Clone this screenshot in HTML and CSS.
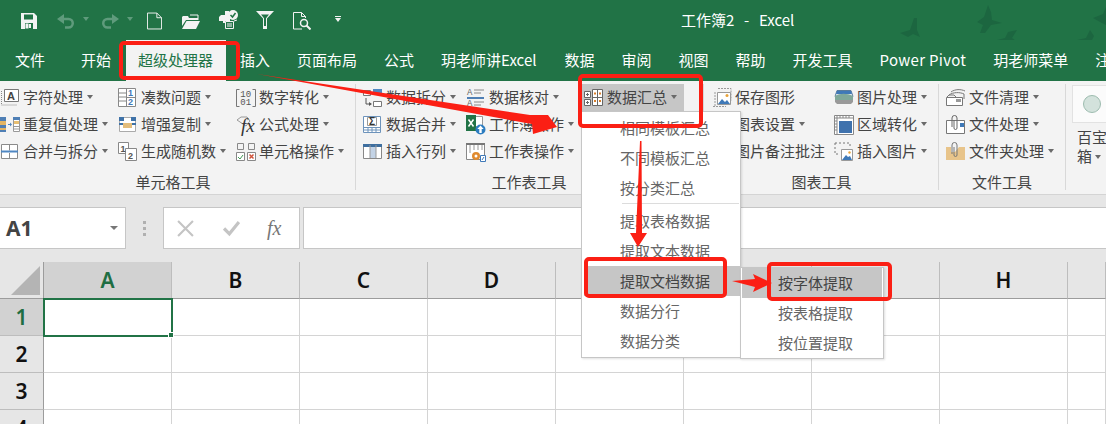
FILE: index.html
```html
<!DOCTYPE html>
<html lang="zh">
<head>
<meta charset="utf-8">
<title>工作簿2 - Excel</title>
<link rel="stylesheet" href="styles.css">
</head>
<body>
<div class="titlebar">
  <svg class="qi q-save" viewBox="0 0 16 16"><path fill="#f3f3f3" d="M0 0h13l3 3v13H0z"/><path fill="#217346" d="M3 1.500h9v5H3zM4 10h8v6H4z"/><path fill="#f3f3f3" d="M8 11h2v4H8zM4.500 10.500h3v5h-3z"/></svg>
  <svg class="qi q-undo" viewBox="0 0 18 15"><path fill="none" stroke="#5f9b7c" stroke-width="2.500" d="M4 5h7.500a4.200 4.200 0 0 1 0 8.500H8"/><path fill="#5f9b7c" d="M7 0v10L0 5z"/></svg>
  <i class="qcaret"></i>
  <svg class="qi q-redo" viewBox="0 0 18 15"><path fill="none" stroke="#5f9b7c" stroke-width="2.500" d="M14 5H6.500a4.200 4.200 0 0 0 0 8.500H10"/><path fill="#5f9b7c" d="M11 0v10l7-5z"/></svg>
  <i class="qcaret"></i>
  <svg class="qi q-new" viewBox="0 0 16 18"><path fill="none" stroke="#f3f3f3" d="M.5.500h10l5 5v12H.500zM10.500.500v5h5"/></svg>
  <svg class="qi q-open" viewBox="0 0 18 15"><path fill="#f3f3f3" d="M0 3l1-1h5l1 2h9v2H4L0 12zM4.500 7H18l-4 8H0z"/><path fill="none" stroke="#f3f3f3" d="M8 1h8v5"/></svg>
  <svg class="qi q-print" viewBox="0 0 20 20"><path fill="#f3f3f3" d="M0 7l2-2h4V1h4v4h1v6h-2v2H4v-2H0z"/><circle cx="14" cy="5" r="5" fill="#f3f3f3"/><path fill="none" stroke="#217346" stroke-width="1.500" d="M11.500 5l2 2 3-4"/><path fill="#217346" d="M6 11h9v8H6z"/><path fill="none" stroke="#f3f3f3" d="M6.500 11.500h8v7h-8zM8 14h5M8 16h5M15 11l3-1"/></svg>
  <svg class="qi q-filter" viewBox="0 0 18 18"><path fill="#f3f3f3" d="M0 0h18l-7 7.500V18H7V7.500z"/><path fill="#217346" d="M5 3.500h8L10 7.200V15H8V7.200z"/></svg>
  <svg class="qi q-find" viewBox="0 0 18 18"><path fill="none" stroke="#f3f3f3" d="M9 17H.500V.500h8l4 4V6M8.500.500v4h4"/><circle cx="11" cy="11" r="3.500" fill="none" stroke="#f3f3f3" stroke-width="1.500"/><path stroke="#f3f3f3" stroke-width="2" d="M13.500 13.500l4 4"/></svg>
  <span class="qcustom"><b></b><i class="qcaret wh"></i></span>
  <span class="booktitle">工作簿2&nbsp; -&nbsp; Excel</span>
  <svg class="birds" viewBox="890 0 216 64"><g fill="#1c6640"><path d="M900 33L910 30 914 18 917 18 917 30 920 37 913 34 908 37z"/><path d="M977 22L984 17 988 5 991 12 992 20 1002 23 991 25 985 33 980 33 983 25z"/><path d="M997 40L1005 38 1008 32 1017 30 1012 38 1020 44 1010 43 1008 50 1004 43z"/><path d="M1077 40L1086 38 1090 30 1094 36 1092 40 1100 44 1093 45 1092 55 1088 45z"/><path d="M1093 18L1103 14 1106 7V25L1100 22z"/></g></svg>
</div>
<nav class="tabs">
  <span class="tab first">文件</span><span class="tab">开始</span><span class="tab active">超级处理器</span><span class="tab">插入</span><span class="tab">页面布局</span><span class="tab">公式</span><span class="tab t-excel">玥老师讲Excel</span><span class="tab">数据</span><span class="tab">审阅</span><span class="tab">视图</span><span class="tab">帮助</span><span class="tab">开发工具</span><span class="tab t-pp">Power Pivot</span><span class="tab">玥老师菜单</span><span class="tab">注</span>
</nav>
<section class="ribbon">
  <div class="group g1">
    <div class="cols">
      <div class="col c118">
        <div class="item"><svg class="ic" viewBox="0 0 20 20"><path fill="none" stroke="#888" stroke-dasharray="1 1" d="M1.500 3v14h16"/><path fill="#fff" stroke="#777" d="M4.500 1.500h14v12h-14z"/><text x="7" y="11.500" class="svgt" fill="#444">A</text></svg><span>字符处理</span><i class="caret"></i></div>
        <div class="item"><svg class="ic" viewBox="0 0 20 20"><path fill="#4f7fb5" d="M0 2h6v4H0zM0 10h6v3H0zM0 15h6v2H0z"/><path fill="#e3b565" d="M0 6h6v4H0zM0 13h6v2H0z"/><path fill="#fff" stroke="#999" d="M13.500 2.500h6v14h-6z"/><path fill="#4f7fb5" d="M13 2h7v3h-7z"/><path fill="#e8bf72" d="M14 6h5v3h-5z"/><path stroke="#999" d="M14 11.500h5M14 14h5"/><path stroke="#4f87c2" d="M8 9.500h3"/><path fill="#4f87c2" d="M10 7.500l2 2-2 2z"/></svg><span>重复值处理</span><i class="caret"></i></div>
        <div class="item"><svg class="ic" viewBox="0 0 20 20"><path fill="#fff" stroke="#8a8a8a" d="M1.500 2.500h16v14h-16zM9.500 2.500v6M9.500 11v5.500"/><path stroke="#4f87c2" stroke-width="2" d="M1 9.500h17"/></svg><span>合并与拆分</span><i class="caret"></i></div>
      </div>
      <div class="col c118">
        <div class="item"><svg class="ic" viewBox="0 0 20 20"><path fill="#fff" stroke="#888" d="M.500.500h17v18H.500zM8.500.500v18M1 5h7M1 9h7M1 13h7M9 9.500h8"/><text x="10" y="8" class="svgn" fill="#3f79b8">1</text><text x="10" y="17" class="svgn" fill="#3f79b8">2</text></svg><span>凑数问题</span><i class="caret"></i></div>
        <div class="item"><svg class="ic" viewBox="0 0 20 20"><path fill="#fff" stroke="#aaa" d="M1.500 2.500h16v14h-16z"/><path fill="#3f72a8" d="M1 2h5v4H1zM13 2h5v4h-5z"/><path fill="#e3bd7c" d="M5 8h9v5H5z"/><path fill="#3f72a8" d="M1 8h4v2H1zM14 8h4v2h-4z"/></svg><span>增强复制</span><i class="caret"></i></div>
        <div class="item"><svg class="ic" viewBox="0 0 20 20"><path fill="#fff" stroke="#888" d="M.500.500h10v11H.500z"/><path fill="#fff" stroke="#888" d="M7.500 6.500h11v12h-11z"/><text x="2.500" y="9.500" class="svgn" fill="#555">1</text><text x="10" y="17" class="svgn" fill="#555">2</text></svg><span>生成随机数</span><i class="caret"></i></div>
      </div>
      <div class="col">
        <div class="item"><svg class="ic" viewBox="0 0 20 20"><path fill="none" stroke="#777" d="M3.500 1.500H.500v17h3M16.500 1.500h3v17h-3"/><text x="4.300" y="9" class="svgm" fill="#555">10</text><text x="4.300" y="17" class="svgm" fill="#555">01</text></svg><span>数字转化</span><i class="caret"></i></div>
        <div class="item"><svg class="ic" viewBox="0 0 20 20"><path fill="none" stroke="#999" d="M1 5l4-3h6l3 4-4 5z"/><text x="5" y="17" class="svgf" fill="#333">fx</text></svg><span>公式处理</span><i class="caret"></i></div>
        <div class="item"><svg class="ic" viewBox="0 0 20 20"><path fill="none" stroke="#888" d="M1.500 1.500h6v6h-6zM12.500 1.500h6v6h-6z"/><path fill="#fff" stroke="#888" d="M.500 10.500h8v8h-8zM11.500 10.500h8v8h-8z"/><path fill="none" stroke="#3f9a55" d="M2 15l2 2 3-4"/><path fill="none" stroke="#d0533a" stroke-width="1.500" d="M13.500 12.500l4 4M17.500 12.500l-4 4"/></svg><span>单元格操作</span><i class="caret"></i></div>
      </div>
    </div>
    <div class="glabel lb1">单元格工具</div>
  </div>
  <div class="group g2">
    <div class="cols">
      <div class="col c103">
        <div class="item"><svg class="ic" viewBox="0 0 20 20"><path fill="#fff" stroke="#777" d="M.500 2.500h7v5h-7zM10.500 13.500h8v5h-8z"/><path fill="#4f87c2" d="M10 1h9v6h-9z"/><path fill="none" stroke="#555" d="M3 10v6h5"/><path fill="#555" d="M6 14l3 2-3 2z"/></svg><span>数据拆分</span><i class="caret"></i></div>
        <div class="item"><svg class="ic" viewBox="0 0 20 20"><path fill="#fff" stroke="#6d93bb" d="M.500 1.500h17v16H.500z"/><path stroke="#6d93bb" d="M1 12.500h17M1 15h17M5 12v5M9 12v5M13 12v5"/><path fill="none" stroke="#999" d="M4.500 2.500h9v8h-9z"/><text x="6" y="10" class="svgs" fill="#333">Σ</text></svg><span>数据合并</span><i class="caret"></i></div>
        <div class="item"><svg class="ic" viewBox="0 0 20 20"><path fill="#fff" stroke="#888" d="M.500 2.500h18v14H.500z"/><path fill="#c3d3e6" d="M7 3h6v13H7z"/><path fill="#3f6f9f" d="M0 2h19v3H0z"/><path stroke="#999" d="M7 3v13M13 3v13"/></svg><span>插入行列</span><i class="caret"></i></div>
      </div>
      <div class="col">
        <div class="item"><svg class="ic" viewBox="0 0 20 20"><text x="1" y="7" class="svgm" fill="#666">A</text><text x="1" y="18" class="svgm" fill="#666">A</text><path stroke="#888" d="M8 2h10M8 5h7M8 14h10M8 17h7"/><path stroke="#4f7fb5" stroke-width="2" d="M1 10h17"/></svg><span>数据核对</span><i class="caret"></i></div>
        <div class="item"><svg class="ic" viewBox="0 0 20 20"><path fill="#fff" stroke="#999" d="M6.500 1.500h10v10h-10z"/><path fill="#217346" d="M0 0h10v16H0z"/><path stroke="#fff" stroke-width="1.500" d="M2.500 4.500l5 7M7.500 4.500l-5 7"/><circle cx="14.500" cy="14.500" r="5" fill="#2c7cc0"/><path fill="#fff" d="M14.500 10.500l3.200 3.500h-2v4h-2.400v-4h-2z"/></svg><span>工作薄操作</span><i class="caret"></i></div>
        <div class="item"><svg class="ic" viewBox="0 0 20 20"><path fill="#fff" stroke="#888" d="M.500 1.500h18v16H.500z"/><path stroke="#999" d="M4 2v9M8 2v6M12 2v6M16 2v6"/><path fill="#777" d="M0 1h19v2H0z"/><circle cx="10" cy="14" r="4" fill="#e08a2e"/><circle cx="10" cy="14" r="1.500" fill="#fff"/><path fill="#fff" stroke="#3f79b8" d="M14.500 13.500h5v6h-5z"/><path stroke="#3f79b8" d="M16 18l2-3"/></svg><span>工作表操作</span><i class="caret"></i></div>
      </div>
    </div>
    <div class="glabel lb2">工作表工具</div>
    <div class="col sumcol"><div class="item hot"><svg class="ic" viewBox="0 0 20 20"><path fill="#fff" stroke="#666" d="M.500 3.500h6v6h-6zM.500 11.500h6v6h-6zM8.500 1.500h10v16h-10zM8.500 9.500h10M13.500 1.500v16"/><path stroke="#666" d="M2 6.500h3M3.500 5v3M2 14.500h3M3.500 13v3"/><path stroke="#d97f2c" stroke-width="2" d="M10 5.500h2M15 5.500h2M10 13h2M15 13h2"/></svg><span>数据汇总</span><i class="caret"></i></div></div>
  </div>
  <div class="group g3">
    <div class="cols">
      <div class="col c122">
        <div class="item"><svg class="ic" viewBox="0 0 20 20"><path fill="none" stroke="#999" stroke-dasharray="2 1" d="M6 .500h13v12M3 4v14M1 18.500h13"/><path fill="#fff" stroke="#999" d="M5.500 4.500h13v12h-13z"/><path fill="#3f79b8" d="M6 16l4-5 3 3 2-2 3 4z"/><circle cx="15" cy="7.500" r="1.500" fill="#e8a33a"/></svg><span>保存图形</span></div>
        <div class="item"><span class="sp">图表设置</span><i class="caret"></i></div>
        <div class="item"><span class="sp">图片备注批注</span></div>
      </div>
      <div class="col">
        <div class="item"><svg class="ic" viewBox="0 0 20 20"><path fill="#e6edf3" stroke="#5a7c9c" d="M3 2.500h14l2 6H1z"/><path fill="#3f79b8" d="M3 3h14l1 3H2z"/><path fill="#7fa89a" d="M1 8c5-3 12-3 18 0v4H1z"/><path fill="#999" d="M1 12h18v2l-2 2H3l-2-2z"/></svg><span>图片处理</span><i class="caret"></i></div>
        <div class="item"><svg class="ic" viewBox="0 0 20 20"><path fill="#fff" stroke="#888" d="M.500.500h19v19H.500zM3 1v18M1 3h18M1 6h2M1 9h2M1 12h2M1 15h2M6 1v2M9 1v2M12 1v2M15 1v2"/><path fill="#3f72ad" d="M5 6h13v12H5z"/></svg><span>区域转化</span><i class="caret"></i></div>
        <div class="item"><svg class="ic" viewBox="0 0 20 20"><path fill="none" stroke="#777" stroke-dasharray="2 2" d="M1 1h15v4M1 1v11h4"/><path fill="#fff" stroke="#999" d="M7.500 7.500h11v11h-11z"/><path fill="#3f79b8" d="M8 18l4-5 2 2 2-1 2 4z"/><circle cx="15.500" cy="10.500" r="1.200" fill="#e8a33a"/></svg><span>插入图片</span><i class="caret"></i></div>
      </div>
    </div>
    <div class="glabel lb3">图表工具</div>
  </div>
  <div class="group g4">
    <div class="cols">
      <div class="col">
        <div class="item"><svg class="ic" viewBox="0 0 20 20"><path fill="none" stroke="#777" d="M5 4c4-3 10-3 14-1M3 7c4-3 11-3 15-1v5"/><path fill="#fff" stroke="#777" d="M.500 9.500h16v8H.500z"/><path fill="none" stroke="#777" d="M1 9l2-2h5l2 2"/><path fill="#999" d="M10 11h5v3h-5z"/></svg><span>文件清理</span><i class="caret"></i></div>
        <div class="item"><svg class="ic" viewBox="0 0 20 20"><path fill="#fff" stroke="#777" d="M.500 5.500h18v13H.500z"/><path fill="none" stroke="#666" d="M6 12V3a2.500 2.500 0 0 1 5 0v10a1.500 1.500 0 0 1-3 0V5"/><path fill="#3f79b8" d="M14 8h4v4h-4z"/></svg><span>文件处理</span><i class="caret"></i></div>
        <div class="item"><svg class="ic" viewBox="0 0 20 20"><path fill="#e8c48a" d="M0 5h5v6H0zM13 5h6v6h-6z"/><path fill="#e8c48a" d="M0 10h19v8H0z"/><path fill="#e8c48a" d="M13 5l-4 5h4z"/><path fill="none" stroke="#777" d="M6 12V3a2.500 2.500 0 0 1 5 0v10a1.500 1.500 0 0 1-3 0V5"/></svg><span>文件夹处理</span><i class="caret"></i></div>
      </div>
    </div>
    <div class="glabel lb3">文件工具</div>
  </div>
  <div class="group g5">
    <div class="gallery"><i class="dot"></i></div>
    <div class="bbox">百宝<br>箱 <i class="caret"></i></div>
  </div>
</section>
<section class="fbar">
  <div class="namebox"><span class="a1">A1</span><i class="caret"></i></div>
  <div class="grip"><i></i><i></i><i></i></div>
  <div class="fxbox">
    <svg class="fxi" viewBox="0 0 16 16"><path stroke="#c4c4c4" stroke-width="2" d="M1 1l14 14M15 1L1 15"/></svg>
    <svg class="fxi" viewBox="0 0 16 16"><path fill="none" stroke="#c4c4c4" stroke-width="3" d="M1 8l5 5L15 2"/></svg>
    <span class="fxt">fx</span>
  </div>
  <div class="input"></div>
</section>
<section class="sheet">
  <div class="hd corner"><svg class="tri" viewBox="0 0 29 29"><path fill="#b4b4b4" d="M29 0v29H0z"/></svg></div>
  <div class="hd col-on">A</div><div class="hd">B</div><div class="hd">C</div><div class="hd">D</div><div class="hd"></div><div class="hd"></div><div class="hd"></div><div class="hd">H</div><div class="hd"></div>
  <div class="rh rh-on">1</div><div class="cell sel"><i class="handle"></i></div><div class="cell"></div><div class="cell"></div><div class="cell"></div><div class="cell"></div><div class="cell"></div><div class="cell"></div><div class="cell"></div><div class="cell"></div>
  <div class="rh">2</div><div class="cell"></div><div class="cell"></div><div class="cell"></div><div class="cell"></div><div class="cell"></div><div class="cell"></div><div class="cell"></div><div class="cell"></div><div class="cell"></div>
  <div class="rh">3</div><div class="cell"></div><div class="cell"></div><div class="cell"></div><div class="cell"></div><div class="cell"></div><div class="cell"></div><div class="cell"></div><div class="cell"></div><div class="cell"></div>
  <div class="rh">4</div><div class="cell"></div><div class="cell"></div><div class="cell"></div><div class="cell"></div><div class="cell"></div><div class="cell"></div><div class="cell"></div><div class="cell"></div><div class="cell"></div>
</section>
<div class="menu">
  <div class="mi">相同模板汇总</div>
  <div class="mi">不同模板汇总</div>
  <div class="mi">按分类汇总</div>
  <div class="msep"></div>
  <div class="mi">提取表格数据</div>
  <div class="mi">提取文本数据</div>
  <div class="mi on">提取文档数据</div>
  <div class="mi">数据分行</div>
  <div class="mi">数据分类</div>
</div>
<div class="submenu">
  <div class="si on">按字体提取</div>
  <div class="si">按表格提取</div>
  <div class="si">按位置提取</div>
</div>
<svg class="marks" viewBox="0 0 1106 424">
  <g fill="none" stroke="#fb1f14" stroke-width="4">
    <rect x="121" y="43" width="117" height="35" rx="3"/>
    <rect x="580" y="76" width="121" height="50" rx="3"/>
    <rect x="586" y="259" width="139" height="37" rx="3"/>
    <rect x="769" y="264" width="121" height="35" rx="3"/>
  </g>
  <g fill="#fb1f14">
    <path d="M257 74L530 115 548 115 557 127 533 134 532 124z"/>
    <path d="M640 141h1.500L642 233 647 233 638 247 630 233 636 233z"/>
    <path d="M732 281L755 279 753 274 772 283 753 292 755 287z"/>
  </g>
</svg>
</body>
</html>
```
FILE: styles.css
```css
* { box-sizing: border-box; }
html, body { margin: 0; padding: 0; }
body {
  width: 1106px; height: 424px; overflow: hidden; position: relative;
  background: #fff; color: #444;
  font: 15px/20px "Noto Sans CJK SC", "Noto Sans", sans-serif;
}
i { display: block; font-style: normal; }

.titlebar { height: 40px; background: #217346; display: flex; align-items: center; padding-left: 21px; position: relative; overflow: hidden; }
.qi { flex: none; display: block; }
.q-save { width: 16px; height: 16px; margin-top: 2px; }
.q-undo { width: 18px; height: 15px; margin-left: 20px; margin-top: 3px; }
.qcaret { width: 0; height: 0; border: 3px solid transparent; border-top: 4px solid #5f9b7c; border-bottom: 0; margin-left: 8px; margin-top: -2px; }
.q-redo { width: 18px; height: 15px; margin-left: 12px; margin-top: 3px; }
.q-new { width: 15px; height: 18px; margin-left: 14px; margin-top: 2px; }
.q-open { width: 18px; height: 15px; margin-left: 20px; margin-top: 2px; }
.q-print { width: 20px; height: 20px; margin-left: 19px; }
.q-filter { width: 18px; height: 18px; margin-left: 17px; }
.q-find { width: 18px; height: 18px; margin-left: 19px; margin-top: 2px; }
.qcustom { margin-left: 24px; margin-top: -3px; width: 6px; }
.qcustom b { display: block; height: 1px; background: #f3f3f3; margin-bottom: 1px; }
.qcaret.wh { border-top-color: #f3f3f3; margin: 0; }
.booktitle { margin-left: 340px; color: #fff; white-space: nowrap; word-spacing: 1.500px; }
.birds { position: absolute; left: 890px; top: 0; width: 216px; height: 64px; }

.tabs { height: 41px; background: #217346; display: flex; gap: 27px; padding-left: 15px; color: #fff; white-space: nowrap; overflow: hidden; position: relative; }
.tab { line-height: 40px; flex: none; }
.tab.first { margin-right: 9px; }
.tab.active { background: #f3f3f3; color: #217346; padding: 0 13px 0 12px; margin: 0 -13px 0 -12px; }
.t-excel { margin-right: 1px; }
.t-pp { letter-spacing: .3px; }

.ribbon { height: 114px; background: #f3f3f3; border-bottom: 1px solid #d4d4d4; display: flex; overflow: hidden; }
.group { flex: none; position: relative; display: flex; flex-direction: column; border-right: 1px solid #d8d8d8; margin: 3px 0 4px; }
.g1 { width: 356px; }
.g2 { width: 348px; padding-left: 7px; }
.g3 { width: 235px; padding-left: 8px; }
.g4 { width: 127px; padding-left: 7px; }
.g5 { flex: 1; border: 0; padding-left: 6px; }
.cols { display: flex; }
.col { flex: none; }
.c118 { width: 118px; }
.c103 { width: 103px; }
.c122 { width: 122px; }
.item { height: 27px; display: flex; align-items: center; white-space: nowrap; color: #444; }
.item span { margin-bottom: 2px; }
.ic { width: 20px; height: 20px; flex: none; margin-right: 3px; overflow: visible; }
.sp { margin-left: 23px; }
.caret { width: 0; height: 0; border: 3px solid transparent; border-top: 4px solid #6a6a6a; border-bottom: 0; margin-left: 4px; margin-top: -1px; flex: none; }
.glabel { text-align: center; line-height: 16px; margin-top: 9px; color: #444; white-space: nowrap; }
.lb1 { padding-right: 9px; }
.lb2 { width: 220px; margin-left: 56px; }
.lb3 { padding-right: 7px; }
.sumcol { position: absolute; left: 226px; top: 0; }
.item.hot { background: #c6c6c6; width: 102px; padding-left: 2px; }

.svgt { font: bold 11px "Liberation Sans", sans-serif; }
.svgn { font: bold 9px "Liberation Sans", sans-serif; }
.svgm { font: 9px "Liberation Mono", monospace; }
.svgs { font: bold 10px "Liberation Sans", sans-serif; }
.svgf { font: italic 19px "Liberation Serif", serif; }

.gallery { width: 40px; height: 38px; margin-top: 1px; background: #fbfbfb; border: 1px solid #e2e2e2; border-right: 0; display: flex; align-items: center; padding-left: 10px; }
.dot { width: 18px; height: 18px; border-radius: 50%; background: #d3e2dc; border: 1px solid #9dbcaf; }
.bbox { margin-top: 4px; padding-left: 5px; line-height: 19px; color: #444; white-space: nowrap; }
.bbox .caret { display: inline-block; vertical-align: 3px; margin: 0; }

.fbar { height: 67px; background: #e6e6e6; display: flex; align-items: flex-start; padding-top: 12px; }
.namebox { width: 126px; height: 42px; background: #fff; border: 1px solid #c6c6c6; border-left: 0; display: flex; align-items: center; justify-content: space-between; padding: 0 7px 0 6px; }
.a1 { font: 700 21px/28px "Noto Sans", sans-serif; color: #444; }
.namebox .caret { border-top-color: #777; border-width: 4px 4px 0; }
.grip { width: 37px; padding-top: 14px; display: flex; flex-direction: column; align-items: center; gap: 3px; }
.grip i { width: 3px; height: 3px; background: #b0b0b0; }
.fxbox { width: 137px; height: 42px; background: #fff; border: 1px solid #c6c6c6; display: flex; align-items: center; padding-left: 13px; gap: 29px; }
.fxi { width: 17px; height: 17px; display: block; }
.fxt { font: italic 20px "Liberation Serif", serif; color: #777; margin-left: -2px; }
.input { flex: 1; height: 42px; background: #fff; border: 1px solid #c6c6c6; border-right: 0; margin-left: 3px; }

.sheet { display: grid; grid-template-columns: 44px repeat(8, 128px) 1fr; grid-template-rows: repeat(4, 37px) 37px; overflow: hidden; height: 162px; }
.hd { background: #e6e6e6; border-right: 1px solid #bdbdbd; border-bottom: 1px solid #9c9c9c; text-align: center; font: 600 21px/36px "Noto Sans", sans-serif; color: #111; }
.corner { position: relative; display: flex; justify-content: flex-end; align-items: flex-end; padding: 0 3px 3px 0; border-right: 1px solid #9c9c9c; }
.tri { width: 29px; height: 29px; display: block; }
.col-on { background: #d2d2d2; color: #1f6e43; }
.rh { background: #e6e6e6; border-right: 1px solid #9c9c9c; border-bottom: 1px solid #bdbdbd; text-align: center; font: 600 21px/36px "Noto Sans", sans-serif; color: #111; }
.rh-on { background: #d2d2d2; color: #1f6e43; }
.cell { border-right: 1px solid #d4d4d4; border-bottom: 1px solid #d4d4d4; position: relative; }
.cell.sel { outline: 2px solid #217346; outline-offset: -1px; z-index: 1; }
.handle { position: absolute; right: -3px; bottom: -3px; background: #217346; border: 1px solid #fff; box-sizing: content-box; width: 4px; height: 4px; }

.menu { position: absolute; left: 581px; top: 111px; width: 160px; height: 247px; background: #fff; border: 1px solid #c6c6c6; box-shadow: 1px 1px 2px rgba(0,0,0,.12); color: #666; padding-top: 1px; z-index: 2; }
.mi { height: 30px; line-height: 30px; padding-left: 38px; }
.msep { height: 1px; background: #dcdcdc; margin: 0 1px 2px 40px; }
.mi.on { background: #c6c6c6; color: #444; margin: 0 -1px 0 2px; padding-left: 36px; }
.submenu { position: absolute; left: 740px; top: 267px; width: 144px; height: 92px; background: #fff; border: 1px solid #c6c6c6; box-shadow: 1px 1px 2px rgba(0,0,0,.12); color: #666; padding: 0 1px 1px; z-index: 2; }
.si { height: 30px; line-height: 30px; padding-left: 36px; }
.si.on { background: #c6c6c6; color: #444; }
.marks { position: absolute; left: 0; top: 0; width: 1106px; height: 424px; z-index: 3; pointer-events: none; }
```
